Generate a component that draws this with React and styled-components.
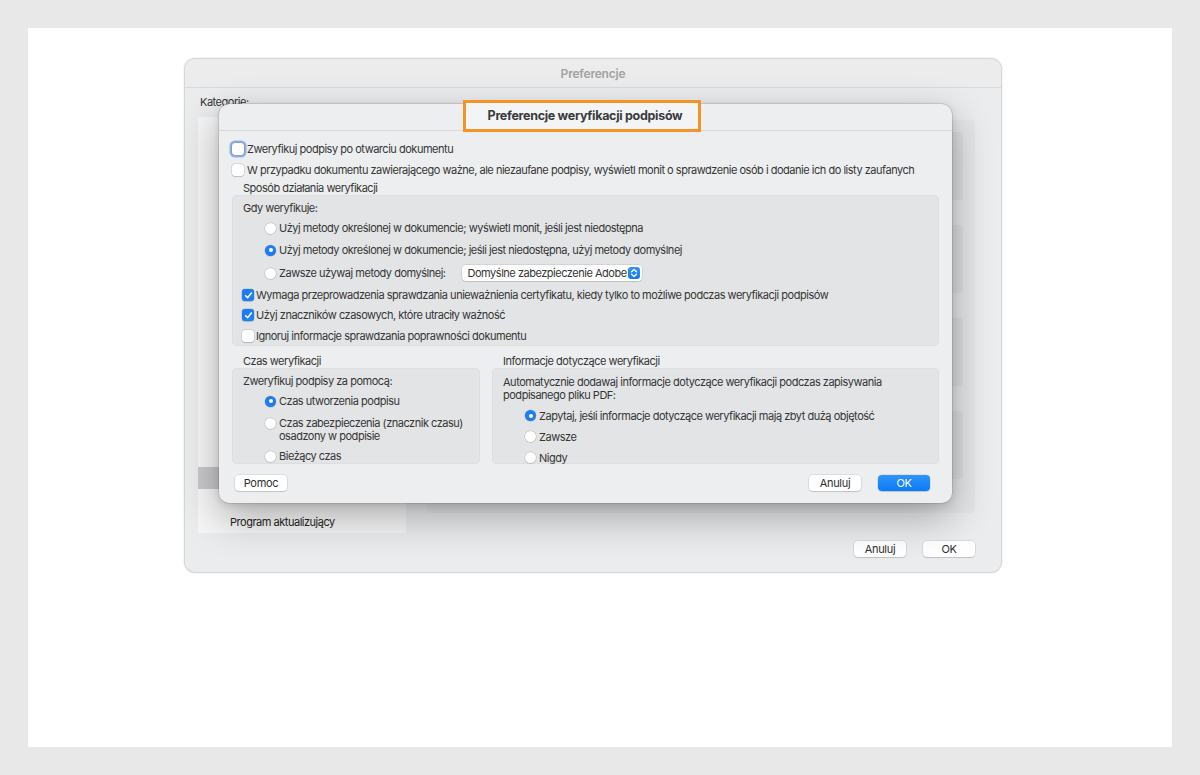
import React from "react";
import styled, { createGlobalStyle } from "styled-components";

const GlobalStyle = createGlobalStyle`
  html, body { margin: 0; padding: 0; background: #e8e8e8; }
  body {
    font-family: Inter, "Noto Sans", sans-serif;
    font-size: 11px;
    letter-spacing: -0.48px;
    color: #363636;
    -webkit-font-smoothing: antialiased;
  }
`;

const Frame = styled.div`
  margin: 28px;
  height: 719px;
  background: #fff;
  padding: 31px 0 0 157px;
  box-sizing: border-box;
`;

const Window = styled.div`
  position: relative;
  width: 816px;
  height: 513px;
  background: #ebecee;
  border-radius: 10px;
  box-shadow: 0 0 0 1px #d6d6d6, 0 0 0 2px #f6f6f6;
  display: flex;
  flex-direction: column;
`;

const WindowTitle = styled.div`
  height: 28px;
  border-bottom: 1px solid #d9d9d9;
  display: flex;
  align-items: center;
  justify-content: center;
  font-size: 12px;
  font-weight: 600;
  letter-spacing: -0.2px;
  color: #a2a2a2;
  background: #ececec;
  border-radius: 10px 10px 0 0;
`;

const WindowBody = styled.div`
  padding: 0 26px 0 13px;
  display: flex;
  flex-direction: column;
`;

const Caption = styled.div`
  height: 14px;
  margin-top: 7px;
  padding-left: 2px;
  line-height: 14px;
`;

const MainRow = styled.div`
  display: flex;
  gap: 21px;
  margin-top: 8px;
  align-items: flex-start;
`;

const Sidebar = styled.div`
  width: 208px;
  height: 416px;
  background: #f6f6f6;
  overflow: hidden;
  display: flex;
  flex-direction: column;
  justify-content: flex-end;
`;

const SideItem = styled.div`
  height: 22px;
  flex: none;
  display: flex;
  align-items: center;
  padding-left: 32px;
  padding-bottom: ${(p) => (p.$raised ? 8 : 0)}px;
  box-sizing: border-box;
  background: ${(p) => (p.$selected ? "#c9c9cb" : "transparent")};
  color: #262626;
`;

const Panel = styled.div`
  width: 548px;
  height: 393px;
  margin-top: 3px;
  background: #e4e6e8;
  border-radius: 4px;
  box-sizing: border-box;
  padding: 12px 12px 0 12px;
  display: flex;
  flex-direction: column;
  gap: 25px;
`;

const PanelBox = styled.div`
  height: 68px;
  background: #dcdee1;
  border-radius: 4px;
`;

const Footer = styled.div`
  display: flex;
  justify-content: flex-end;
  gap: 17px;
  margin-top: 8px;
`;

const Button = styled.button`
  width: 52px;
  height: 16px;
  padding: 0;
  border: none;
  border-radius: 4px;
  font-family: inherit;
  font-size: 11px;
  letter-spacing: -0.3px;
  line-height: 16px;
  color: ${(p) => (p.$primary ? "#fff" : "#2f2f2f")};
  background: ${(p) =>
    p.$primary ? "linear-gradient(#2f93ff, #0a7cf5)" : "#fff"};
  box-shadow: 0 0 0 0.5px rgba(0, 0, 0, 0.14), 0 1px 1px rgba(0, 0, 0, 0.12);
`;

/* ---------- dialog sheet ---------- */

const Dialog = styled.div`
  position: absolute;
  left: 34px;
  top: 45px;
  width: 733px;
  height: 399px;
  background: #eceef0;
  border-radius: 10px;
  box-shadow: 0 0 0 0.5px rgba(0, 0, 0, 0.18), 0 14px 40px rgba(0, 0, 0, 0.3),
    0 2px 8px rgba(0, 0, 0, 0.12);
  display: flex;
  flex-direction: column;
`;

const DialogTitle = styled.div`
  height: 26px;
  flex: none;
  border-bottom: 1px solid #d6d8da;
  display: flex;
  align-items: center;
  justify-content: center;
`;

const Highlight = styled.div`
  margin: -3px 0 0 -7px;
  width: 226px;
  height: 26px;
  border: 3px solid #f39424;
  background: #f3f4f6;
  display: flex;
  align-items: center;
  justify-content: center;
  padding-left: 6px;
  font-size: 12.5px;
  font-weight: 700;
  letter-spacing: -0.3px;
  color: #3a3a3c;
`;

const DialogBody = styled.div`
  padding: 7px 13px 0 13px;
  display: flex;
  flex-direction: column;
`;

const Row = styled.div`
  height: ${(p) => p.$h || 21}px;
  flex: none;
  display: flex;
  align-items: ${(p) => (p.$top ? "flex-start" : "center")};
  padding-top: ${(p) => p.$top || 0}px;
  box-sizing: border-box;
  padding-left: ${(p) => p.$indent || 0}px;
  gap: ${(p) => (p.$gap == null ? 3 : p.$gap)}px;
  white-space: nowrap;
`;

const SectionLabel = styled.div`
  height: 13px;
  padding-top: 2px;
  line-height: 13px;
  margin-top: ${(p) => p.$top || 0}px;
  padding-left: 11px;
`;

const Group = styled.div`
  background: #e2e4e6;
  border-radius: 5px;
  box-shadow: inset 0 0 0 0.5px rgba(0, 0, 0, 0.05);
  padding: 4px 10px 0 10px;
  box-sizing: border-box;
  height: ${(p) => p.$h}px;
  overflow: hidden;
  display: flex;
  flex-direction: column;
`;

const GroupLabel = styled.div`
  line-height: 13px;
  padding: ${(p) => p.$pad || "3px 0 2px"} 1px;
  flex: none;
`;

const Columns = styled.div`
  display: grid;
  grid-template-columns: 248px 447px;
  gap: 12px;
`;

const TwoLine = styled.span`
  line-height: 13px;
  white-space: nowrap;
`;

const RadioDot = styled.span`
  width: 11px;
  height: 11px;
  flex: none;
  border-radius: 50%;
  box-sizing: border-box;
  position: relative;
  margin-top: ${(p) => p.$dy || 0}px;
  background: ${(p) => (p.$on ? "#1b7cf4" : "#fff")};
  box-shadow: 0 0 0 0.5px rgba(0, 0, 0, ${(p) => (p.$on ? 0.1 : 0.18)}),
    0 0.5px 1px rgba(0, 0, 0, 0.15);
  &::after {
    content: "";
    display: ${(p) => (p.$on ? "block" : "none")};
    position: absolute;
    left: 3.5px;
    top: 3.5px;
    width: 4px;
    height: 4px;
    border-radius: 50%;
    background: #fff;
  }
`;

const Box = styled.span`
  width: 12px;
  height: 12px;
  flex: none;
  border-radius: 3px;
  display: flex;
  align-items: center;
  justify-content: center;
  background: ${(p) => (p.$on ? "#1b7cf4" : "#fff")};
  box-shadow: ${(p) =>
    p.$focus
      ? "0 0 0 0.5px rgba(0,0,0,0.2), 0 0 0 2.5px rgba(64,128,224,0.55)"
      : "0 0 0 0.5px rgba(0,0,0,0.16), 0 0.5px 1px rgba(0,0,0,0.12)"};
`;

const Select = styled.div`
  margin-left: 13px;
  width: 180px;
  height: 16px;
  box-sizing: border-box;
  background: #fff;
  border-radius: 4px;
  box-shadow: 0 0 0 0.5px rgba(0, 0, 0, 0.14), 0 1px 1px rgba(0, 0, 0, 0.1);
  display: flex;
  align-items: center;
  justify-content: space-between;
  padding: 0 2px 0 6px;
`;

const Stepper = styled.span`
  width: 12px;
  height: 12px;
  flex: none;
  border-radius: 3px;
  background: linear-gradient(#3592fb, #1479ef);
  display: flex;
  align-items: center;
  justify-content: center;
`;

const DialogFooter = styled.div`
  display: flex;
  align-items: center;
  margin-top: 11px;
  padding: 0 9px 0 3px;
  gap: 17px;
`;

const Spacer = styled.div`
  flex: 1;
`;

function Check({ on, focus, children }) {
  return (
    <>
      <Box $on={on} $focus={focus}>
        {on && (
          <svg width="9" height="9" viewBox="0 0 9 9">
            <path
              d="M1.6 4.8 L3.6 6.8 L7.4 2"
              fill="none"
              stroke="#fff"
              strokeWidth="1.6"
              strokeLinecap="round"
              strokeLinejoin="round"
            />
          </svg>
        )}
      </Box>
      <span>{children}</span>
    </>
  );
}

function Radio({ on, dy, children }) {
  return (
    <>
      <RadioDot $on={on} $dy={dy} />
      {children}
    </>
  );
}

// only the rows that show below the sheet
const categories = ["Podpisy", "Pomiary (3D)", "Program aktualizujący"];

export default function App() {
  return (
    <>
      <GlobalStyle />
      <Frame>
        <Window>
          <WindowTitle>Preferencje</WindowTitle>
          <WindowBody>
            <Caption>Kategorie:</Caption>
            <MainRow>
              <Sidebar>
                {categories.map((c) => (
                  <SideItem
                    key={c}
                    $selected={c === "Podpisy"}
                    $raised={c === "Pomiary (3D)"}
                  >
                    {c === "Podpisy" ? "" : c}
                  </SideItem>
                ))}
              </Sidebar>
              <Panel>
                <PanelBox />
                <PanelBox />
                <PanelBox />
                <PanelBox />
              </Panel>
            </MainRow>
            <Footer>
              <Button>Anuluj</Button>
              <Button>OK</Button>
            </Footer>
          </WindowBody>

          <Dialog>
            <DialogTitle>
              <Highlight>Preferencje weryfikacji podpisów</Highlight>
            </DialogTitle>
            <DialogBody>
              <Row>
                <Check focus>Zweryfikuj podpisy po otwarciu dokumentu</Check>
              </Row>
              <Row>
                <Check>
                  W przypadku dokumentu zawierającego ważne, ale niezaufane
                  podpisy, wyświetl monit o sprawdzenie osób i dodanie ich do
                  listy zaufanych
                </Check>
              </Row>
              <SectionLabel>Sposób działania weryfikacji</SectionLabel>
              <Group $h={151}>
                <GroupLabel>Gdy weryfikuje:</GroupLabel>
                <Row $h={22} $indent={23}>
                  <Radio>
                    Użyj metody określonej w dokumencie; wyświetl monit, jeśli
                    jest niedostępna
                  </Radio>
                </Row>
                <Row $h={22} $indent={23}>
                  <Radio on>
                    Użyj metody określonej w dokumencie; jeśli jest
                    niedostępna, użyj metody domyślnej
                  </Radio>
                </Row>
                <Row $h={24} $indent={23}>
                  <Radio>Zawsze używaj metody domyślnej:</Radio>
                  <Select>
                    <span>Domyślne zabezpieczenie Adobe</span>
                    <Stepper>
                      <svg width="8" height="10" viewBox="0 0 8 10">
                        <path
                          d="M1.5 3.8 L4 1.5 L6.5 3.8 M1.5 6.2 L4 8.5 L6.5 6.2"
                          fill="none"
                          stroke="#fff"
                          strokeWidth="1.3"
                          strokeLinecap="round"
                          strokeLinejoin="round"
                        />
                      </svg>
                    </Stepper>
                  </Select>
                </Row>
                <Row $h={20} $gap={2}>
                  <Check on>
                    Wymaga przeprowadzenia sprawdzania unieważnienia
                    certyfikatu, kiedy tylko to możliwe podczas weryfikacji
                    podpisów
                  </Check>
                </Row>
                <Row $h={20} $gap={2}>
                  <Check on>Użyj znaczników czasowych, które utraciły ważność</Check>
                </Row>
                <Row $h={21} $gap={2}>
                  <Check>Ignoruj informacje sprawdzania poprawności dokumentu</Check>
                </Row>
              </Group>

              <Columns>
                <div>
                  <SectionLabel $top={7}>Czas weryfikacji</SectionLabel>
                  <Group $h={96}>
                    <GroupLabel>Zweryfikuj podpisy za pomocą:</GroupLabel>
                    <Row $h={22} $indent={23}>
                      <Radio on>Czas utworzenia podpisu</Radio>
                    </Row>
                    <Row $h={34} $indent={23} $top={5}>
                      <Radio dy={1}>
                        <TwoLine>
                          Czas zabezpieczenia (znacznik czasu)
                          <br />
                          osadzony w podpisie
                        </TwoLine>
                      </Radio>
                    </Row>
                    <Row $h={20} $indent={23}>
                      <Radio>Bieżący czas</Radio>
                    </Row>
                  </Group>
                </div>
                <div>
                  <SectionLabel $top={7}>Informacje dotyczące weryfikacji</SectionLabel>
                  <Group $h={96}>
                    <GroupLabel $pad="4px 0 3px">
                      Automatycznie dodawaj informacje dotyczące weryfikacji
                      podczas zapisywania
                      <br />
                      podpisanego pliku PDF:
                    </GroupLabel>
                    <Row $h={21} $indent={23}>
                      <Radio on>
                        Zapytaj, jeśli informacje dotyczące weryfikacji mają
                        zbyt dużą objętość
                      </Radio>
                    </Row>
                    <Row $h={21} $indent={23}>
                      <Radio>Zawsze</Radio>
                    </Row>
                    <Row $h={21} $indent={23}>
                      <Radio>Nigdy</Radio>
                    </Row>
                  </Group>
                </div>
              </Columns>

              <DialogFooter>
                <Button>Pomoc</Button>
                <Spacer />
                <Button>Anuluj</Button>
                <Button $primary>OK</Button>
              </DialogFooter>
            </DialogBody>
          </Dialog>
        </Window>
      </Frame>
    </>
  );
}
